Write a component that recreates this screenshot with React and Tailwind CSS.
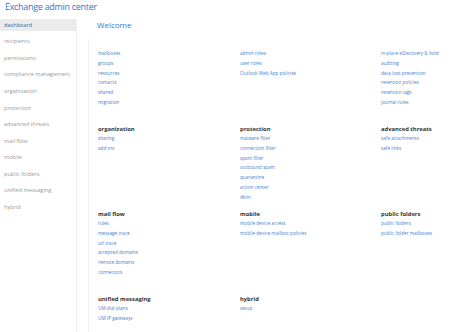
const nav = [
  'dashboard',
  'recipients',
  'permissions',
  'compliance management',
  'organization',
  'protection',
  'advanced threats',
  'mail flow',
  'mobile',
  'public folders',
  'unified messaging',
  'hybrid',
]

const rows = [
  [
    { title: '', links: ['mailboxes', 'groups', 'resources', 'contacts', 'shared', 'migration'] },
    { title: '', links: ['admin roles', 'user roles', 'Outlook Web App policies'] },
    {
      title: '',
      links: ['in-place eDiscovery & hold', 'auditing', 'data loss prevention', 'retention policies', 'retention tags', 'journal rules'],
    },
  ],
  [
    { title: 'organization', links: ['sharing', 'add-ins'] },
    {
      title: 'protection',
      links: ['malware filter', 'connection filter', 'spam filter', 'outbound spam', 'quarantine', 'action center', 'dkim'],
    },
    { title: 'advanced threats', links: ['safe attachments', 'safe links'] },
  ],
  [
    {
      title: 'mail flow',
      links: ['rules', 'message trace', 'url trace', 'accepted domains', 'remote domains', 'connectors'],
    },
    { title: 'mobile', links: ['mobile device access', 'mobile device mailbox policies'] },
    { title: 'public folders', links: ['public folders', 'public folder mailboxes'] },
  ],
  [
    { title: 'unified messaging', links: ['UM dial plans', 'UM IP gateways'] },
    { title: 'hybrid', links: ['setup'] },
    null,
  ],
]

function Section({ section }) {
  if (!section) return <div />
  return (
    <div className="flex flex-col">
      <div className="h-[10px] text-[5.8px] font-bold leading-[10px] text-[#333333]">{section.title}</div>
      {section.links.map((l) => (
        <a key={l} className="h-[9.8px] text-[4.7px] leading-[9.8px] whitespace-nowrap text-[#3f82d0]">
          {l}
        </a>
      ))}
    </div>
  )
}

export default function App() {
  return (
    <div
      className="flex h-[332px] w-[450px] flex-col overflow-hidden bg-white"
      style={{ fontFamily: '"Open Sans", "Noto Sans", sans-serif' }}
    >
      <header className="h-[19px] shrink-0 pl-[5px] pt-[1px] text-[9px] leading-[11px] tracking-[-0.3px] text-[#2a7bd4]">
        Exchange admin center
      </header>

      <div className="flex min-h-0 flex-1 overflow-hidden">
        {/* left nav */}
        <nav className="flex w-[77px] shrink-0 flex-col gap-[4.55px] border-r border-[#f0f0f0]">
          {nav.map((item, i) => (
            <div
              key={item}
              className={`flex h-3 shrink-0 items-center pl-[4px] text-[5.6px] whitespace-nowrap ${
                i === 0 ? 'bg-[#ebebeb] text-[#41689c]' : 'text-[#9a9a9a]'
              }`}
            >
              {item}
            </div>
          ))}
        </nav>

        <main className="flex flex-1 flex-col pl-[11px]">
          <h1 className="h-[19px] shrink-0 pl-[9px] pt-[1px] text-[8px] leading-[10px] text-[#2a7bd4]">Welcome</h1>
          <div className="mt-[1px] flex flex-col border-l border-[#f2f2f2] pl-[9px]">
            {rows.map((row, r) => (
              <div key={r} className="grid h-[85px] shrink-0 grid-cols-[142px_141px_1fr]">
                {row.map((s, i) => (
                  <Section key={i} section={s} />
                ))}
              </div>
            ))}
          </div>
        </main>
      </div>
    </div>
  )
}
